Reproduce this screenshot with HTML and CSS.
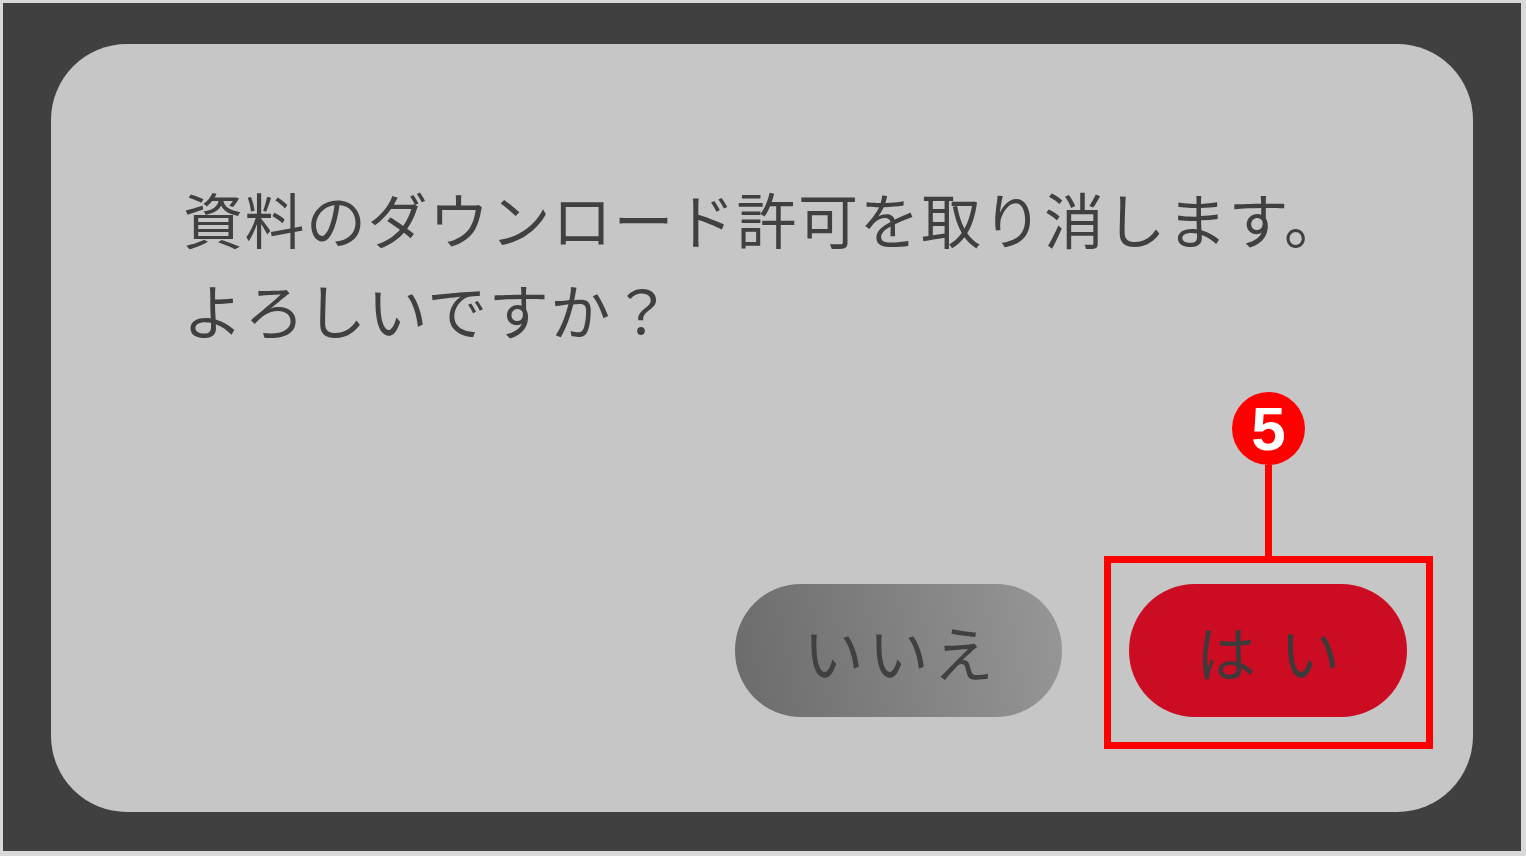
FILE: index.html
```html
<!DOCTYPE html>
<html lang="ja">
<head>
    <meta charset="UTF-8">
    <meta name="viewport" content="width=device-width, initial-scale=1.0">
    <title>ダウンロード許可の取り消し</title>
    <link rel="stylesheet" href="styles.css">
</head>
<body>
    <div class="frame">
        <div class="dialog">
            <p class="message">資料のダウンロード許可を取り消します。<br>よろしいですか？</p>

            <div class="actions">
                <button class="btn btn-no"><span>いいえ</span></button>
                <div class="yes-wrap">
                    <button class="btn btn-yes"><span>はい</span></button>
                    <!-- callout -->
                    <div class="callout-box"></div>
                    <div class="callout-line"></div>
                    <div class="callout-badge">5</div>
                </div>
            </div>
        </div>
    </div>
</body>
</html>
```

FILE: styles.css
```css
html, body {
    margin: 0;
    padding: 0;
}
body {
    background: #d9d9d9;
    font-family: "Noto Sans CJK JP", "Noto Sans", sans-serif;
}
.frame {
    box-sizing: border-box;
    height: 848px;
    margin: 3px 5px 5px 3px;
    padding: 41px 48px 39px 48px;
    background: #404040;
    display: flex;
}
.dialog {
    flex: 1;
    display: flex;
    flex-direction: column;
    background: #c6c6c6;
    border-radius: 76px;
    padding: 128px 66px 95px 132px;
}
.message {
    margin: 0;
    font-size: 60px;
    line-height: 91px;
    letter-spacing: 1.5px;
    color: #404040;
}
.actions {
    margin-top: auto;
    display: flex;
    justify-content: flex-end;
    align-items: center;
    gap: 67px;
}
.btn {
    height: 133px;
    border: none;
    border-radius: 66px;
    padding: 0;
    font-family: inherit;
    font-size: 60px;
    color: #404040;
    cursor: pointer;
}
.btn-no {
    width: 327px;
    background: linear-gradient(80deg, #6b6b6b 0%, #979797 100%);
}
.btn-no span {
    letter-spacing: 5px;
    margin-right: -5px;
}
.btn-yes {
    width: 278px;
    background: #cc0c22;
    color: #3c3a3a;
}
.btn-yes span {
    letter-spacing: 24px;
    margin-right: -24px;
}
.yes-wrap {
    position: relative;
    display: flex;
}
.callout-box {
    position: absolute;
    top: -28px;
    left: -25px;
    right: -26px;
    bottom: -32px;
    border: 7px solid #ff0000;
}
.callout-line {
    position: absolute;
    top: -119px;
    left: 50%;
    width: 7px;
    height: 93px;
    margin-left: -3px;
    background: #ff0000;
}
.callout-badge {
    position: absolute;
    top: -192px;
    left: 50%;
    width: 73px;
    height: 73px;
    margin-left: -36px;
    border-radius: 50%;
    background: #ff0000;
    color: #fff;
    font-family: "Liberation Sans", Arial, sans-serif;
    font-weight: bold;
    font-size: 62px;
    line-height: 73px;
    text-align: center;
}
```
